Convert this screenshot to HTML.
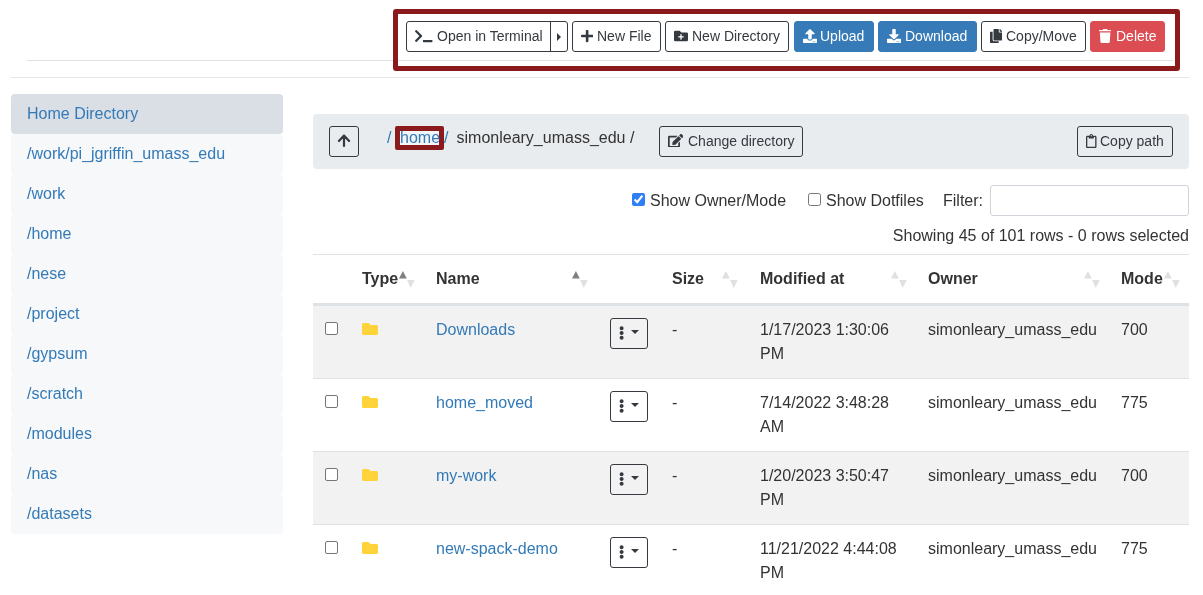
<!DOCTYPE html>
<html><head><meta charset="utf-8">
<style>
*{box-sizing:border-box}
html,body{margin:0;padding:0}
body{width:1203px;height:595px;overflow:hidden;background:#fff;font-family:"Liberation Sans",sans-serif;font-size:16px;line-height:24px;color:#333;position:relative}
.abs{position:absolute}
a,.lnk{color:#337ab7;text-decoration:none}
.hr1{position:absolute;left:27px;top:60px;width:1146px;height:1px;background:#dee2e6}
.hr2{position:absolute;left:11px;top:77px;width:1178px;height:1px;background:#e5e5e5}
.btn{position:absolute;top:21px;height:31px;border:1px solid #343a40;border-radius:3px;font-size:14px;line-height:21px;color:#343a40;background:#fff;white-space:nowrap}
.btn svg{position:absolute;left:8px;top:6.85px;height:14px;fill:currentColor}
.btn .t{position:absolute;top:4px}
.primary{background:#367ab7;border-color:#367ab7;color:#fff}
.danger{background:#dc4c53;border-color:#dc4c53;color:#fff}
.redbox{position:absolute;left:393px;top:9px;width:787px;height:62px;border:5px solid #8b1a1d;border-radius:3px}
.side{position:absolute;left:11px;top:94px;width:272px}
.side div{height:40px;padding:8px 16px;background:#f7f8fa;border-radius:4px;color:#337ab7;margin:0}
.side div.act{background:#dadee5}
.crumb{position:absolute;left:313px;top:114px;width:876px;height:55px;background:#e9ecef;border-radius:4px}
.cb{position:absolute;width:13px;height:13px;border:1px solid #767676;border-radius:2px;background:#fff}
.th{position:absolute;top:267px;font-weight:bold;color:#333}
.row{position:absolute;left:313px;width:876px;height:73px;border-top:1px solid #dee2e6}
.row.g{background:#f2f2f2}
.row > *{position:absolute}
.sort{position:absolute;top:270px;width:16px;height:18px}
.dd{width:38px;height:31px;border:1px solid #343a40;border-radius:3px}
</style></head><body><div id="wrap" style="position:absolute;left:0;top:0;width:1203px;height:595px;will-change:transform">
<div class="hr1"></div>
<div class="hr2"></div>

<div class="btn" style="left:406px;width:162px">
  <svg viewBox="0 0 640 512" style="height:14px;width:17.5px"><path d="M257.981 272.971L63.638 467.314c-9.373 9.373-24.569 9.373-33.941 0L7.029 444.647c-9.357-9.357-9.375-24.522-.04-33.901L161.011 256 6.99 101.255c-9.335-9.379-9.317-24.544.04-33.901l22.667-22.667c9.373-9.373 24.569-9.373 33.941 0L257.981 239.03c9.373 9.372 9.373 24.568 0 33.941zM640 456v-32c0-13.255-10.745-24-24-24H312c-13.255 0-24 10.745-24 24v32c0 13.255 10.745 24 24 24h304c13.255 0 24-10.745 24-24z"/></svg>
  <span class="t" style="left:30px">Open in Terminal</span>
  <div class="abs" style="left:143px;top:0;width:1px;height:29px;background:#343a40"></div>
  <div class="abs" style="left:150px;top:11px;width:0;height:0;border-top:4px solid transparent;border-bottom:4px solid transparent;border-left:4px solid #343a40"></div>
</div>
<div class="btn" style="left:572px;width:89px">
  <svg viewBox="0 0 448 512" style="width:12.25px"><path d="M416 208H272V64c0-17.67-14.33-32-32-32h-32c-17.67 0-32 14.33-32 32v144H32c-17.67 0-32 14.33-32 32v32c0 17.67 14.33 32 32 32h144v144c0 17.67 14.33 32 32 32h32c17.67 0 32-14.33 32-32V304h144c17.67 0 32-14.33 32-32v-32c0-17.670-14.33-32-32-32z"/></svg>
  <span class="t" style="left:24px">New File</span></div>
<div class="btn" style="left:665px;width:124px">
  <svg viewBox="0 0 512 512" style="width:14px"><path d="M464 128H272L208 64H48A48 48 0 0 0 0 112V400a48 48 0 0 0 48 48H464a48 48 0 0 0 48-48V176A48 48 0 0 0 464 128ZM359.5 296a16 16 0 0 1-16 16h-64v64a16 16 0 0 1-16 16h-16a16 16 0 0 1-16-16V312h-64a16 16 0 0 1-16-16V280a16 16 0 0 1 16-16h64V200a16 16 0 0 1 16-16h16a16 16 0 0 1 16 16v64h64a16 16 0 0 1 16 16Z"/></svg>
  <span class="t" style="left:26px">New Directory</span></div>
<div class="btn primary" style="left:794px;width:80px">
  <svg viewBox="0 0 512 512" style="width:14px"><path d="M296 384h-80c-13.3 0-24-10.7-24-24V192h-87.7c-17.8 0-26.7-21.5-14.1-34.1L242.3 5.7c7.5-7.5 19.8-7.5 27.3 0l152.2 152.2c12.6 12.6 3.7 34.1-14.1 34.1H320v168c0 13.3-10.7 24-24 24zm216-8v112c0 13.3-10.7 24-24 24H24c-13.3 0-24-10.7-24-24V376c0-13.3 10.7-24 24-24h136v8c0 30.9 25.1 56 56 56h80c30.9 0 56-25.1 56-56v-8h136c13.3 0 24 10.7 24 24zm-124 88c0-11-9-20-20-20s-20 9-20 20 9 20 20 20 20-9 20-20zm64 0c0-11-9-20-20-20s-20 9-20 20 9 20 20 20 20-9 20-20z"/></svg>
  <span class="t" style="left:25px">Upload</span></div>
<div class="btn primary" style="left:878px;width:99px">
  <svg viewBox="0 0 512 512" style="width:14px"><path d="M216 0h80c13.3 0 24 10.7 24 24v168h87.7c17.8 0 26.7 21.5 14.1 34.1L269.7 378.3c-7.5 7.5-19.8 7.5-27.3 0L90.1 226.1c-12.6-12.6-3.7-34.1 14.100-34.1H192V24c0-13.3 10.7-24 24-24zm296 376v112c0 13.3-10.7 24-24 24H24c-13.3 0-24-10.7-24-24V376c0-13.3 10.7-24 24-24h146.7l49 49c20.1 20.1 52.5 20.1 72.6 0l49-49H488c13.3 0 24 10.7 24 24zm-124 88c0-11-9-20-20-20s-20 9-20 20 9 20 20 20 20-9 20-20zm64 0c0-11-9-20-20-20s-20 9-20 20 9 20 20 20 20-9 20-20z"/></svg>
  <span class="t" style="left:26px">Download</span></div>
<div class="btn" style="left:981px;width:105px">
  <svg viewBox="0 0 448 512" style="width:12.25px"><path d="M320 448v40c0 13.255-10.745 24-24 24H24c-13.255 0-24-10.745-24-24V120c0-13.255 10.745-24 24-24h72v296c0 30.879 25.121 56 56 56h168zm0-344V0H152c-13.255 0-24 10.745-24 24v368c0 13.255 10.745 24 24 24h272c13.255 0 24-10.745 24-24V128H344c-13.2 0-24-10.8-24-24zm120.971-31.029L375.029 7.029A24 24 0 0 0 358.059 0H352v96h96v-6.059a24 24 0 0 0-7.029-16.970z"/></svg>
  <span class="t" style="left:24px">Copy/Move</span></div>
<div class="btn danger" style="left:1090px;width:75px">
  <svg viewBox="0 0 448 512" style="width:12.25px"><path d="M432 32H312l-9.4-18.7A24 24 0 0 0 281.1 0H166.8a23.72 23.72 0 0 0-21.4 13.3L136 32H16A16 16 0 0 0 0 48v16a16 16 0 0 0 16 16h416a16 16 0 0 0 16-16V48a16 16 0 0 0-16-16zM53.2 467a48 48 0 0 0 47.9 45h245.8a48 48 0 0 0 47.9-45L416 128H32z"/></svg>
  <span class="t" style="left:25px">Delete</span></div>
<div class="redbox"></div>

<div class="side">
<div class="act">Home Directory</div>
<div>/work/pi_jgriffin_umass_edu</div>
<div>/work</div>
<div>/home</div>
<div>/nese</div>
<div>/project</div>
<div>/gypsum</div>
<div>/scratch</div>
<div>/modules</div>
<div>/nas</div>
<div>/datasets</div>
</div>

<div class="crumb"></div>
<div class="btn" style="left:329px;top:126px;width:30px;height:31px;background:transparent">
  <svg viewBox="0 0 28 29" style="left:0;top:0;width:28px;height:29px;fill:none;stroke:#343a40;stroke-width:2.2;stroke-linecap:round;stroke-linejoin:round"><path d="M14 9V19M8.9 13.9L14 8.6L19.1 13.9"/></svg>
</div>
<span class="abs lnk" style="left:387px;top:125.5px">/</span>
<div class="abs" style="left:395px;top:126px;width:49px;height:24px;border:5px solid #8b1a1d;border-radius:2px;background:#f3f6f9"></div>
<span class="abs lnk" style="left:400px;top:125.5px">home</span>
<span class="abs lnk" style="left:444px;top:125.5px">/</span>
<span class="abs" style="left:456.5px;top:125.5px;color:#333">simonleary_umass_edu /</span>
<div class="btn" style="left:659px;top:126px;width:144px;background:transparent">
  <svg viewBox="0 0 576 512" style="left:7.5px;top:6.6px;width:15.4px;height:13.7px"><path d="M402.6 83.2l90.2 90.2c3.8 3.8 3.8 10 0 13.8L274.4 405.6l-92.8 10.3c-12.4 1.4-22.9-9.1-21.5-21.5l10.3-92.8L388.8 83.2c3.8-3.8 10-3.8 13.8 0zm162-22.9l-48.8-48.8c-15.2-15.2-39.9-15.2-55.2 0l-35.4 35.4c-3.8 3.8-3.8 10 0 13.8l90.2 90.2c3.8 3.8 10 3.8 13.8 0l35.4-35.4c15.2-15.3 15.2-40 0-55.2zM384 346.2V448H64V128h229.8c3.2 0 6.2-1.3 8.5-3.5l40-40c7.6-7.6 2.2-20.5-8.5-20.5H48C21.5 64 0 85.5 0 112v352c0 26.5 21.5 48 48 48h352c26.5 0 48-21.5 48-48V306.2c0-10.7-12.9-16-20.5-8.5l-40 40c-2.2 2.3-3.5 5.300-3.5 8.5z"/></svg>
  <span class="t" style="left:28px">Change directory</span></div>
<div class="btn" style="left:1077px;top:126px;width:96px;background:transparent">
  <svg viewBox="0 0 384 512" style="left:8px;top:6.85px;width:10.5px"><path d="M336 64h-80c0-35.29-28.71-64-64-64s-64 28.71-64 64H48C21.49 64 0 85.49 0 112v352c0 26.51 21.49 48 48 48h288c26.51 0 48-21.49 48-48V112c0-26.51-21.49-48-48-48zM192 40c13.255 0 24 10.745 24 24s-10.745 24-24 24-24-10.745-24-24 10.745-24 24-24zm144 418a6 6 0 0 1-6 6H54a6 6 0 0 1-6-6V118a6 6 0 0 1 6-6h42v36c0 6.627 5.373 12 12 12h168c6.627 0 12-5.373 12-12v-36h42a6 6 0 0 1 6 6z"/></svg>
  <span class="t" style="left:22px">Copy path</span></div>

<!-- filter row -->
<input type="checkbox" checked class="abs" style="left:632px;top:193px;width:13px;height:13px;margin:0;accent-color:#2f7ff6">
<span class="abs" style="left:650px;top:188.7px">Show Owner/Mode</span>
<input type="checkbox" class="abs" style="left:808px;top:193px;width:13px;height:13px;margin:0">
<span class="abs" style="left:826px;top:189px">Show Dotfiles</span>
<span class="abs" style="left:943px;top:189px">Filter:</span>
<div class="abs" style="left:990px;top:185px;width:199px;height:31px;border:1px solid #ced4da;border-radius:3px;background:#fff"></div>
<span class="abs" style="right:14px;top:224px">Showing 45 of 101 rows - 0 rows selected</span>

<!-- table header -->
<div class="abs" style="left:313px;top:254px;width:876px;height:1px;background:#dee2e6"></div>
<div class="abs" style="left:313px;top:303px;width:876px;height:2px;background:#dee2e6"></div>
<span class="th" style="left:362px">Type</span>
<span class="th" style="left:436px">Name</span>
<span class="th" style="left:672px">Size</span>
<span class="th" style="left:760px">Modified at</span>
<span class="th" style="left:928px">Owner</span>
<span class="th" style="left:1121px">Mode</span>
<div class="row g" style="top:305px">
<div class="cb" style="left:12px;top:16px"></div>
<svg viewBox="0 0 512 512" style="left:49px;top:14.6px;width:16px;height:16px;fill:#ffd43b"><path d="M464 128H272l-64-64H48C21.49 64 0 85.49 0 112v288c0 26.51 21.490 48 48 48h416c26.51 0 48-21.49 48-48V176c0-26.51-21.49-48-48-48z"/></svg>
<span class="lnk" style="left:123px;top:11.5px">Downloads</span>
<div class="dd" style="left:297px;top:12px"><svg viewBox="0 0 192 512" style="position:absolute;left:8px;top:6.85px;width:5.25px;height:14px;fill:#343a40"><path d="M96 184c39.8 0 72 32.2 72 72s-32.2 72-72 72-72-32.2-72-72 32.2-72 72-72zM24 80c0 39.8 32.2 72 72 72s72-32.2 72-72S135.8 8 96 8 24 40.2 24 80zm0 352c0 39.8 32.2 72 72 72s72-32.2 72-72-32.2-72-72-72-72 32.2-72 72z"/></svg><div style="position:absolute;left:20px;top:11px;width:0;height:0;border-left:4px solid transparent;border-right:4px solid transparent;border-top:4px solid #343a40"></div></div>
<span style="left:359px;top:11.5px">-</span>
<span style="left:447px;top:11.5px">1/17/2023 1:30:06<br>PM</span>
<span style="left:615px;top:11.5px">simonleary_umass_edu</span>
<span style="left:808px;top:11.5px">700</span>
</div>
<div class="row" style="top:378px">
<div class="cb" style="left:12px;top:16px"></div>
<svg viewBox="0 0 512 512" style="left:49px;top:14.6px;width:16px;height:16px;fill:#ffd43b"><path d="M464 128H272l-64-64H48C21.49 64 0 85.49 0 112v288c0 26.51 21.490 48 48 48h416c26.51 0 48-21.49 48-48V176c0-26.51-21.49-48-48-48z"/></svg>
<span class="lnk" style="left:123px;top:11.5px">home_moved</span>
<div class="dd" style="left:297px;top:12px"><svg viewBox="0 0 192 512" style="position:absolute;left:8px;top:6.85px;width:5.25px;height:14px;fill:#343a40"><path d="M96 184c39.8 0 72 32.2 72 72s-32.2 72-72 72-72-32.2-72-72 32.2-72 72-72zM24 80c0 39.8 32.2 72 72 72s72-32.2 72-72S135.8 8 96 8 24 40.2 24 80zm0 352c0 39.8 32.2 72 72 72s72-32.2 72-72-32.2-72-72-72-72 32.2-72 72z"/></svg><div style="position:absolute;left:20px;top:11px;width:0;height:0;border-left:4px solid transparent;border-right:4px solid transparent;border-top:4px solid #343a40"></div></div>
<span style="left:359px;top:11.5px">-</span>
<span style="left:447px;top:11.5px">7/14/2022 3:48:28<br>AM</span>
<span style="left:615px;top:11.5px">simonleary_umass_edu</span>
<span style="left:808px;top:11.5px">775</span>
</div>
<div class="row g" style="top:451px">
<div class="cb" style="left:12px;top:16px"></div>
<svg viewBox="0 0 512 512" style="left:49px;top:14.6px;width:16px;height:16px;fill:#ffd43b"><path d="M464 128H272l-64-64H48C21.49 64 0 85.49 0 112v288c0 26.51 21.490 48 48 48h416c26.51 0 48-21.49 48-48V176c0-26.51-21.49-48-48-48z"/></svg>
<span class="lnk" style="left:123px;top:11.5px">my-work</span>
<div class="dd" style="left:297px;top:12px"><svg viewBox="0 0 192 512" style="position:absolute;left:8px;top:6.85px;width:5.25px;height:14px;fill:#343a40"><path d="M96 184c39.8 0 72 32.2 72 72s-32.2 72-72 72-72-32.2-72-72 32.2-72 72-72zM24 80c0 39.8 32.2 72 72 72s72-32.2 72-72S135.8 8 96 8 24 40.2 24 80zm0 352c0 39.8 32.2 72 72 72s72-32.2 72-72-32.2-72-72-72-72 32.2-72 72z"/></svg><div style="position:absolute;left:20px;top:11px;width:0;height:0;border-left:4px solid transparent;border-right:4px solid transparent;border-top:4px solid #343a40"></div></div>
<span style="left:359px;top:11.5px">-</span>
<span style="left:447px;top:11.5px">1/20/2023 3:50:47<br>PM</span>
<span style="left:615px;top:11.5px">simonleary_umass_edu</span>
<span style="left:808px;top:11.5px">700</span>
</div>
<div class="row" style="top:524px">
<div class="cb" style="left:12px;top:16px"></div>
<svg viewBox="0 0 512 512" style="left:49px;top:14.6px;width:16px;height:16px;fill:#ffd43b"><path d="M464 128H272l-64-64H48C21.49 64 0 85.49 0 112v288c0 26.51 21.490 48 48 48h416c26.51 0 48-21.49 48-48V176c0-26.51-21.49-48-48-48z"/></svg>
<span class="lnk" style="left:123px;top:11.5px">new-spack-demo</span>
<div class="dd" style="left:297px;top:12px"><svg viewBox="0 0 192 512" style="position:absolute;left:8px;top:6.85px;width:5.25px;height:14px;fill:#343a40"><path d="M96 184c39.8 0 72 32.2 72 72s-32.2 72-72 72-72-32.2-72-72 32.2-72 72-72zM24 80c0 39.8 32.2 72 72 72s72-32.2 72-72S135.8 8 96 8 24 40.2 24 80zm0 352c0 39.8 32.2 72 72 72s72-32.2 72-72-32.2-72-72-72-72 32.2-72 72z"/></svg><div style="position:absolute;left:20px;top:11px;width:0;height:0;border-left:4px solid transparent;border-right:4px solid transparent;border-top:4px solid #343a40"></div></div>
<span style="left:359px;top:11.5px">-</span>
<span style="left:447px;top:11.5px">11/21/2022 4:44:08<br>PM</span>
<span style="left:615px;top:11.5px">simonleary_umass_edu</span>
<span style="left:808px;top:11.5px">775</span>
</div>
<svg class="abs" style="left:399px;top:270px;width:16px;height:19px" viewBox="0 0 16 19"><polygon points="0,8.6 3.9,1.1 7.8,8.6" fill="#808080"/><polygon points="8.1,9.9 15.7,9.9 11.7,18" fill="#e0e0e0"/></svg>
<svg class="abs" style="left:572.4px;top:270px;width:16px;height:19px" viewBox="0 0 16 19"><polygon points="0,8.6 3.9,1.1 7.8,8.6" fill="#808080"/><polygon points="8.1,9.9 15.7,9.9 11.7,18" fill="#e0e0e0"/></svg>
<svg class="abs" style="left:722px;top:270px;width:16px;height:19px" viewBox="0 0 16 19"><polygon points="0,8.6 3.9,1.1 7.8,8.6" fill="#e0e0e0"/><polygon points="8.1,9.9 15.7,9.9 11.7,18" fill="#e0e0e0"/></svg>
<svg class="abs" style="left:890.8px;top:270px;width:16px;height:19px" viewBox="0 0 16 19"><polygon points="0,8.6 3.9,1.1 7.8,8.6" fill="#e0e0e0"/><polygon points="8.1,9.9 15.7,9.9 11.7,18" fill="#e0e0e0"/></svg>
<svg class="abs" style="left:1083.9px;top:270px;width:16px;height:19px" viewBox="0 0 16 19"><polygon points="0,8.6 3.9,1.1 7.8,8.6" fill="#e0e0e0"/><polygon points="8.1,9.9 15.7,9.9 11.7,18" fill="#e0e0e0"/></svg>
<svg class="abs" style="left:1163.7px;top:270px;width:16px;height:19px" viewBox="0 0 16 19"><polygon points="0,8.6 3.9,1.1 7.8,8.6" fill="#e0e0e0"/><polygon points="8.1,9.9 15.7,9.9 11.7,18" fill="#e0e0e0"/></svg>
</div></body></html>
